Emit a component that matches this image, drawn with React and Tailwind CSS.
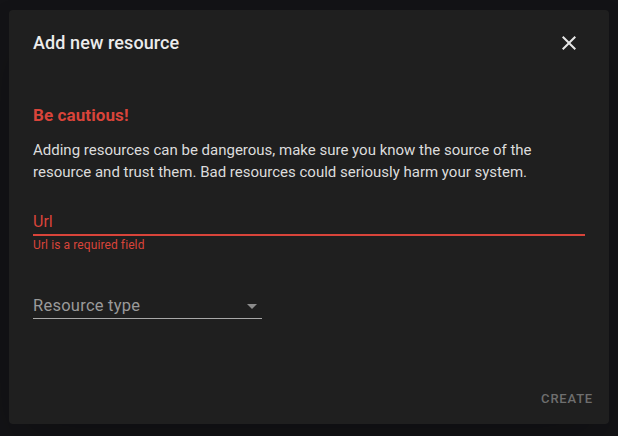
import React from "react";

const font = { fontFamily: "Roboto, 'Liberation Sans', sans-serif" };

export default function App() {
    return (
        <div className="w-[618px] h-[436px] bg-[#131316] pt-[10px] pl-[9px]" style={font}>
            <div className="w-[600px] h-[414px] bg-[#1f1f1f] rounded-[4px] shadow-2xl flex flex-col relative">
                {/* Header */}
                <div className="flex items-center justify-between pl-6 pr-[20px] h-[65px]">
                    <h2 className="text-[18px] font-medium text-[#ececec] tracking-[0.1px]">Add new resource</h2>
                    <button className="w-10 h-10 flex items-center justify-center text-[#e6e6e6]">
                        <svg width="24" height="24" viewBox="0 0 24 24" fill="currentColor">
                            <path d="M19 6.41 17.59 5 12 10.59 6.41 5 5 6.41 10.59 12 5 17.59 6.41 19 12 13.41 17.59 19 19 17.59 13.41 12z" />
                        </svg>
                    </button>
                </div>

                {/* Content */}
                <div className="px-6 flex-1">
                    <p className="mt-[28px] text-[17px] leading-6 font-bold text-[#d9443a] tracking-[0.1px]">Be cautious!</p>
                    <p className="mt-[12px] text-[15px] leading-[22px] text-[#dcdcdc]">
                        Adding resources can be dangerous, make sure you know the source of the resource and trust them. Bad resources could seriously harm your system.
                    </p>

                    {/* Url field */}
                    <div className="mt-[27px]">
                        <div className="text-[16px] leading-6 text-[#d9443a] border-b-2 border-[#d9443a]">Url</div>
                        <div className="mt-[1px] text-[12px] leading-4 text-[#d9443a] tracking-[0.1px]">Url is a required field</div>
                    </div>

                    {/* Resource type select */}
                    <div className="mt-[41px] w-[229px] flex items-center justify-between border-b border-[#a8a8a8]">
                        <span className="text-[16.5px] leading-6 text-[#9a9a9a] tracking-[0.25px]">Resource type</span>
                        <svg width="24" height="24" viewBox="0 0 24 24" fill="#8c8c8c" className="-mr-[2px]">
                            <path d="M7 10l5 5 5-5z" />
                        </svg>
                    </div>
                </div>

                {/* Actions */}
                <div className="flex justify-end pr-2 pb-[7px]">
                    <button className="px-2 h-9 text-[13px] font-medium tracking-[0.8px] text-[#6e6e6e] uppercase">
                        Create
                    </button>
                </div>
            </div>
        </div>
    );
}
